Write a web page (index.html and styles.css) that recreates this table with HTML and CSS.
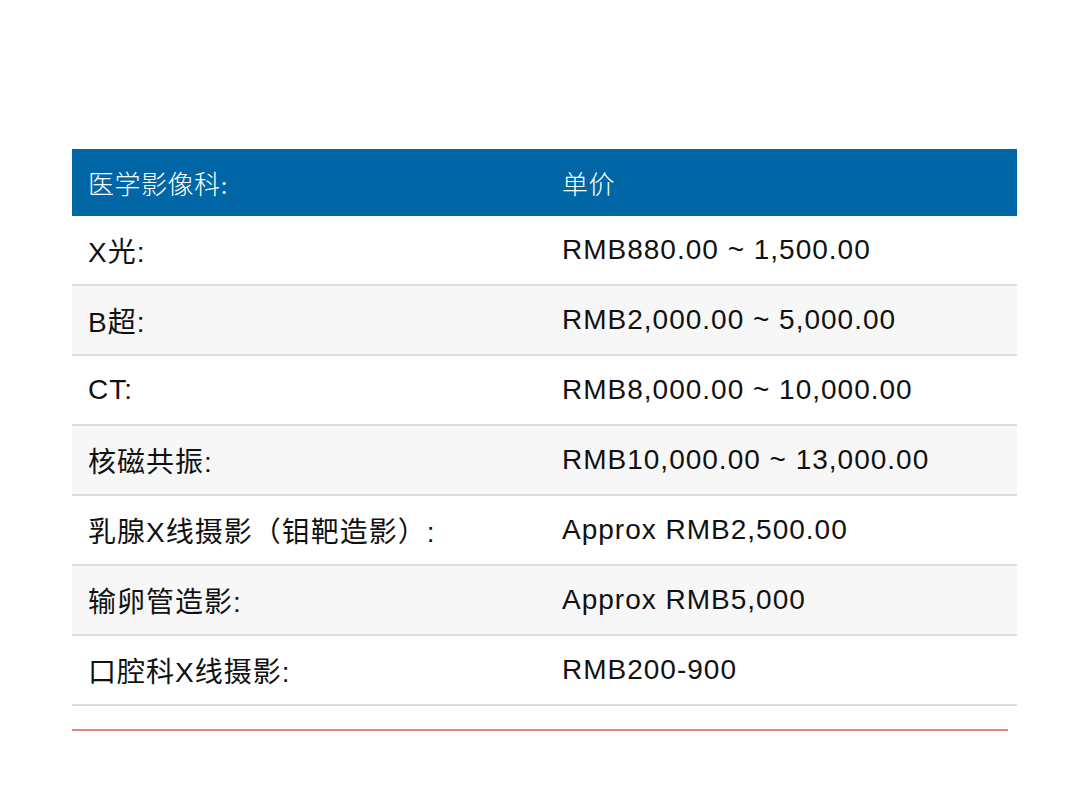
FILE: index.html
```html
<!DOCTYPE html>
<html lang="zh">
<head>
<meta charset="utf-8">
<link rel="stylesheet" href="styles.css">
</head>
<body>
<div class="page">
  <table class="price-table">
    <thead>
      <tr><th class="col-a">医学影像科:</th><th>单价</th></tr>
    </thead>
    <tbody>
      <tr><td>X光:</td><td>RMB880.00 ~ 1,500.00</td></tr>
      <tr><td>B超:</td><td>RMB2,000.00 ~ 5,000.00</td></tr>
      <tr><td>CT:</td><td>RMB8,000.00 ~ 10,000.00</td></tr>
      <tr><td>核磁共振:</td><td>RMB10,000.00 ~ 13,000.00</td></tr>
      <tr><td>乳腺X线摄影（钼靶造影）:</td><td>Approx RMB2,500.00</td></tr>
      <tr><td>输卵管造影:</td><td>Approx RMB5,000</td></tr>
      <tr><td>口腔科X线摄影:</td><td>RMB200-900</td></tr>
    </tbody>
  </table>
  <div class="rule"></div>
</div>
</body>
</html>
```
FILE: styles.css
```css
html, body {
  margin: 0;
  padding: 0;
  background: #ffffff;
}
.page {
  padding: 149px 63px 0 72px;
}
.price-table {
  width: 945px;
  border-collapse: collapse;
  font-family: "Liberation Sans", "Noto Sans CJK SC", sans-serif;
  font-size: 28px;
  letter-spacing: 1px;
  color: #111111;
}
.price-table th {
  background: #0066a6;
  color: #ffffff;
  font-family: "Liberation Serif", "Noto Sans CJK SC", serif;
  font-weight: 300;
  font-size: 26px;
  letter-spacing: 0.5px;
  text-align: left;
  height: 67px;
  padding: 0 0 0 16px;
  vertical-align: middle;
}
.price-table th.col-a {
  width: 458px;
}
.price-table td {
  height: 68px;
  padding: 0 0 0 16px;
  border-bottom: 2px solid #dedede;
  vertical-align: middle;
  font-weight: 400;
}
.price-table tbody tr:nth-child(even) td {
  background: #f7f7f7;
}
.rule {
  width: 936px;
  height: 2px;
  margin-top: 23px;
  background: #e08484;
}
```
